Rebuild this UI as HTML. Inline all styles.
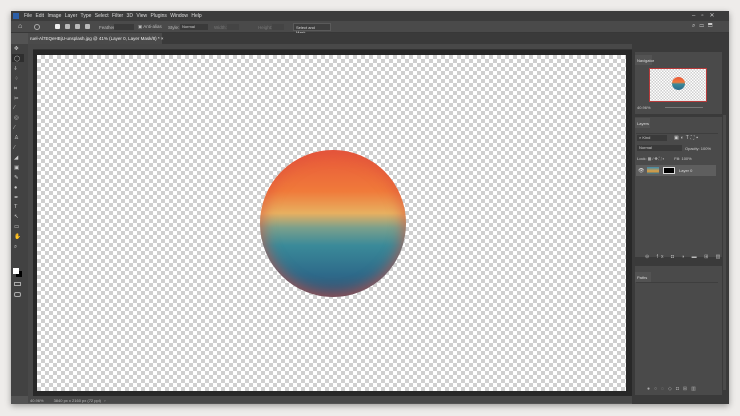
<!DOCTYPE html>
<html><head><meta charset="utf-8"><style>
*{margin:0;padding:0;box-sizing:border-box}
body{width:740px;height:416px;background:#eeecea;position:relative;overflow:hidden;font-family:"Liberation Sans",sans-serif;font-size:5px;color:#ccc}
.a{position:absolute}
.chk{background:repeating-conic-gradient(#cfcfcf 0 25%,#fff 0 50%) 0 0/8px 8px}
.ic{position:absolute;width:5px;height:5px;background:#bbb;border-radius:1px}
</style></head><body>
<div class="a" style="left:11px;top:11px;width:718px;height:393px;background:#535353;box-shadow:0 2px 6px rgba(0,0,0,.35)"></div>
<!-- menu bar -->
<div class="a" style="left:11px;top:11px;width:718px;height:10px;background:#3c3c3c"></div>
<div class="a" style="left:13px;top:13px;width:6px;height:6px;background:#2b5ea7"></div>
<div class="a" style="left:24px;top:12.5px;white-space:nowrap;font-size:5px;color:#ddd;word-spacing:2px">File Edit Image Layer Type Select Filter 3D View Plugins Window Help</div>
<div class="a" style="left:692px;top:12px;color:#ccc;font-size:6px;letter-spacing:6px">–▫✕</div>
<!-- options -->
<div class="a" style="left:11px;top:21px;width:718px;height:12px;background:#4a4a4a;border-bottom:1px solid #383838"></div>
<div class="a" style="left:18px;top:23px;color:#ddd;font-size:7px">⌂</div>
<div class="a" style="left:34px;top:24px;width:6px;height:6px;border:1px solid #aaa;border-radius:50%"></div>
<div class="ic" style="left:55px;top:24px;background:#eee"></div><div class="ic" style="left:65px;top:24px"></div><div class="ic" style="left:75px;top:24px"></div><div class="ic" style="left:85px;top:24px"></div>
<div class="a" style="left:99px;top:24.5px;color:#bbb;font-size:4.5px">Feather:</div>
<div class="a" style="left:114px;top:23.5px;width:20px;height:6px;background:#3a3a3a"></div>
<div class="a" style="left:138px;top:24px;color:#bbb;font-size:4.5px">▣ Anti-alias</div>
<div class="a" style="left:168px;top:24.5px;color:#bbb;font-size:4.5px">Style:</div>
<div class="a" style="left:180px;top:23.5px;width:28px;height:6px;background:#3a3a3a;color:#ccc;font-size:4px;padding-left:2px">Normal</div>
<div class="a" style="left:214px;top:24.5px;color:#777;font-size:4.5px">Width:</div>
<div class="a" style="left:227px;top:23.5px;width:12px;height:6px;background:#444"></div>
<div class="a" style="left:258px;top:24.5px;color:#777;font-size:4.5px">Height:</div>
<div class="a" style="left:272px;top:23.5px;width:12px;height:6px;background:#444"></div>
<div class="a" style="left:293px;top:23px;width:38px;height:8px;background:#3e3e3e;border:1px solid #5a5a5a;color:#ddd;font-size:4px;padding:1px 2px">Select and Mask...</div>
<div class="a" style="left:692px;top:23px;color:#ccc;font-size:6px;letter-spacing:4px">⌕▭⬒</div>
<!-- tab bar -->
<div class="a" style="left:28px;top:33px;width:604px;height:11px;background:#3a3a3a"></div>
<div class="a" style="left:28px;top:33px;width:134px;height:11px;background:#4a4a4a;color:#eee;font-size:4.5px;padding:3px 2px;white-space:nowrap">ruel-Al7EQeHBjU-unsplash.jpg @ 41% (Layer 0, Layer Mask/8) * ×</div>
<!-- ruler -->
<div class="a" style="left:28px;top:44px;width:604px;height:6px;background:#484848;border-bottom:1px solid #333"></div>
<div class="a" style="left:28px;top:44px;width:5px;height:352px;background:#484848"></div>
<!-- canvas area -->
<div class="a" style="left:33px;top:50px;width:599px;height:346px;background:#282828"></div>
<div class="a chk" style="left:37px;top:55px;width:589px;height:336px"></div>
<div class="a" style="left:260px;top:150px;width:146px;height:147px;border-radius:50%;background:linear-gradient(180deg,#e8573a 0%,#f07a3a 28%,#e8b060 43%,#7aa08c 53%,#3a8a99 65%,#2e6a8a 85%,#3a5070 100%);box-shadow:inset 0 0 12px 4px rgba(220,80,60,.55)"></div>
<!-- status -->
<div class="a" style="left:28px;top:396px;width:604px;height:7px;background:#484848;color:#bbb;font-size:4px;padding:1.5px 2px;white-space:nowrap">40.96% &nbsp; &nbsp; &nbsp; &nbsp; 3840 px x 2160 px (72 ppi) &nbsp; ›</div>
<!-- left toolbar -->
<div class="a" style="left:11px;top:44px;width:17px;height:352px;background:#424242"></div>
<div class="a" style="left:12px;top:54px;width:12px;height:8px;background:#2e2e2e"></div>
<div id="tools"></div>
<div class="a" style="left:13px;top:268px;width:6px;height:6px;background:#fff;z-index:2"></div>
<div class="a" style="left:16px;top:271px;width:6px;height:6px;background:#000"></div>
<div class="a" style="left:14px;top:282px;width:7px;height:4px;border:1px solid #aaa"></div>
<div class="a" style="left:14px;top:292px;width:7px;height:5px;border:1px solid #aaa;border-radius:2px"></div>
<!-- right panels -->
<div class="a" style="left:632px;top:33px;width:97px;height:371px;background:#3a3a3a"></div>
<div class="a" style="left:635px;top:52px;width:87px;height:62px;background:#4a4a4a"></div>
<div class="a" style="left:635px;top:55px;width:17px;height:10px;background:#535353;color:#ddd;font-size:4px;padding:3px 2px">Navigator</div>
<div class="a" style="left:649px;top:68px;width:58px;height:34px;border:1px solid #b83a3a" class="chk"></div>
<div class="a chk" style="left:650px;top:69px;width:56px;height:32px;background-size:3px 3px"></div>
<div class="a" style="left:672px;top:77px;width:13px;height:13px;border-radius:50%;background:linear-gradient(180deg,#e8573a,#f07a3a 40%,#3a8a99 55%,#2e6a8a)"></div>
<div class="a" style="left:637px;top:105px;color:#ccc;font-size:4px">40.96%</div>
<div class="a" style="left:665px;top:107px;width:38px;height:1px;background:#777"></div>
<div class="a" style="left:635px;top:117px;width:87px;height:140px;background:#4a4a4a"></div>
<div class="a" style="left:635px;top:118px;width:15px;height:10px;background:#535353;color:#ddd;font-size:4px;padding:3px 2px">Layers</div>
<div class="a" style="left:636px;top:133px;width:82px;height:1px;background:#3e3e3e"></div>
<div class="a" style="left:637px;top:135px;width:30px;height:6px;background:#3a3a3a;color:#ccc;font-size:4px;padding-left:2px">⌕ Kind</div>
<div class="a" style="left:674px;top:135px;color:#ccc;font-size:5px;letter-spacing:2px">▣◐T⛶▪</div>
<div class="a" style="left:637px;top:145px;width:45px;height:6px;background:#3a3a3a;color:#ccc;font-size:4px;padding-left:2px">Normal</div>
<div class="a" style="left:685px;top:146px;color:#ccc;font-size:4px">Opacity: 100%</div>
<div class="a" style="left:637px;top:156px;color:#ccc;font-size:4px;white-space:nowrap">Lock: ▦ ⁄ ✥ ⛶ ▪ &nbsp; &nbsp; &nbsp; &nbsp; Fill: 100%</div>
<div class="a" style="left:636px;top:165px;width:80px;height:11px;background:#5e5e5e"></div>
<div class="a" style="left:638px;top:168px;color:#ddd;font-size:5px">👁</div>
<div class="a" style="left:647px;top:167px;width:12px;height:7px;background:linear-gradient(#3a8ab0,#e0a040 60%,#2e6a8a)"></div>
<div class="a" style="left:663px;top:167px;width:12px;height:7px;background:#000;border:1px solid #ddd"></div>
<div class="a" style="left:679px;top:168px;color:#ddd;font-size:4px">Layer 0</div>
<div class="a" style="left:645px;top:254px;color:#bbb;font-size:5px;letter-spacing:3px">⊖ fx ◘ ◑ ▬ ⊞ ▥</div>
<div class="a" style="left:635px;top:266px;width:87px;height:129px;background:#4a4a4a"></div>
<div class="a" style="left:635px;top:272px;width:16px;height:10px;background:#535353;color:#ddd;font-size:4px;padding:3px 2px">Paths</div>
<div class="a" style="left:636px;top:282px;width:82px;height:1px;background:#3e3e3e"></div>
<div class="a" style="left:647px;top:386px;color:#aaa;font-size:5px;letter-spacing:4px">●○◌◇◘⊞▥</div>
<div class="a" style="left:723px;top:115px;width:3px;height:275px;background:#4a4a4a"></div>
<script>
var t=document.getElementById('tools'),s='✥◯ↆ⁘⌗✂⁄◎⁄♙⁄◢▣✎●✒T↖▭✋⌕';
for(var i=0;i<s.length;i++){var d=document.createElement('div');d.className='a';d.style.cssText='left:14px;top:'+(46+i*9.9)+'px;color:#ccc;font-size:5.5px';d.textContent=s[i];t.appendChild(d);}
</script>
</body></html>
